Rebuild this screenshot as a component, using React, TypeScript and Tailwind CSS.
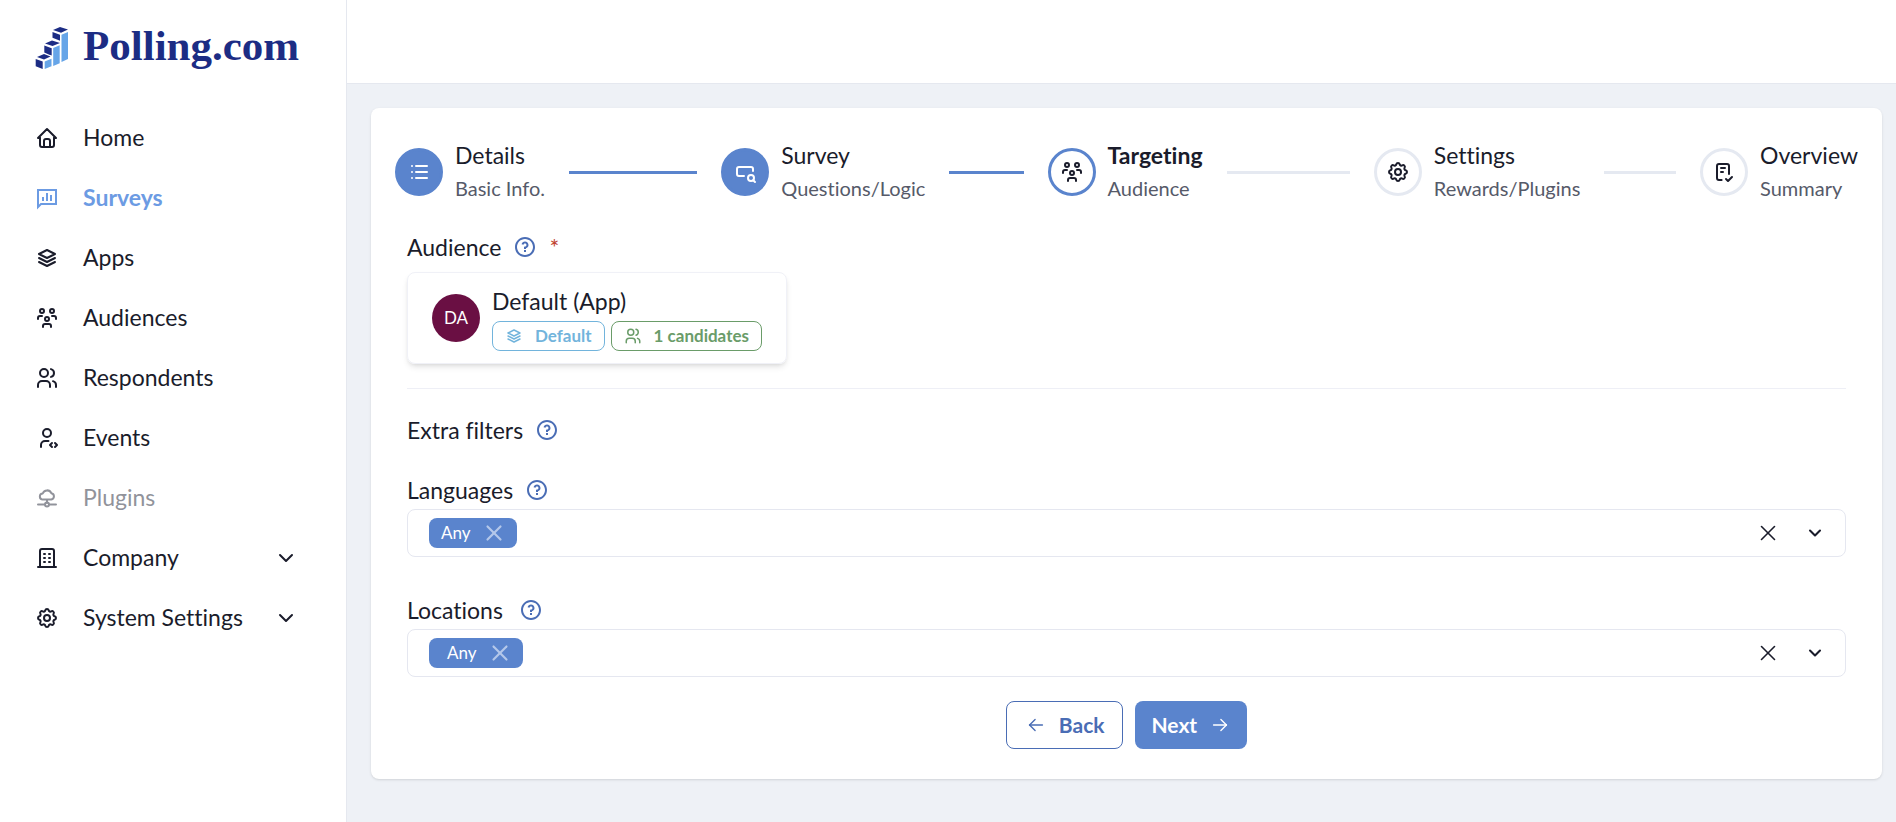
import React, { useState } from "react";
import {
  TbArrowLeft,
  TbArrowRight,
  TbBuilding,
  TbChecklist,
  TbChevronDown,
  TbHome,
  TbInputSearch,
  TbList,
  TbSettings,
  TbStack2,
  TbUserCode,
  TbUsers,
  TbUsersGroup,
  TbX,
} from "react-icons/tb";
import { RiQuestionLine } from "react-icons/ri";

type IconType = React.ComponentType<{ className?: string }>;

const SurveyIcon: IconType = ({ className }) => (
  <svg viewBox="0 0 24 24" fill="none" stroke="currentColor" strokeWidth="2" className={className}>
    <path d="M3 4h18v14H6l-3 3z" />
    <path d="M8 11v4M12 7v8M16 9v6" />
  </svg>
);

const CloudIcon: IconType = ({ className }) => (
  <svg
    viewBox="0 0 24 24"
    fill="none"
    stroke="currentColor"
    strokeWidth="2"
    strokeLinecap="round"
    strokeLinejoin="round"
    className={className}
  >
    <path d="M8 13.500a3 3 0 0 1-.3-6A4.600 4.600 0 0 1 16.300 7.200a3.200 3.200 0 0 1 0 6.300z" />
    <path d="M12 14v3M3 18.500h7M14 18.500h7" />
    <circle cx="12" cy="18.500" r="2" />
  </svg>
);

const LogoMark = () => (
  <svg viewBox="0 0 34 42" className="w-[34px] h-[42px]" aria-hidden="true">
    <g fill="#1c2c84">
      <path d="M18 3l7-3 8 2.500-7 3.200z" />
      <path d="M17.500 5l7.500 2.800v6l-3-1.400-4.500-1.600z" />
      <path d="M10 16.500l7-3 8 2.500-7.500 3z" />
      <path d="M9.300 18.500l7.400 2.700v7.300l-3.500-1.300-3.900-1.700z" />
      <path d="M2 30l7-3 6.500 2.600-6.500 3z" />
      <path d="M.7 32l7 2.600V42l-7-2.700z" />
    </g>
    <g fill="#66a5e8">
      <path d="M26.500 7.800L33 5v27l-6.500 3z" />
      <path d="M18.200 21l6.500-2.800v18l-6.500 2.700z" />
      <path d="M9.700 34.600l6.800-2.800v7.400L9.700 42z" />
    </g>
  </svg>
);

const navItems: { label: string; icon: IconType; active?: boolean; muted?: boolean; expandable?: boolean }[] = [
  { label: "Home", icon: TbHome },
  { label: "Surveys", icon: SurveyIcon, active: true },
  { label: "Apps", icon: TbStack2 },
  { label: "Audiences", icon: TbUsersGroup },
  { label: "Respondents", icon: TbUsers },
  { label: "Events", icon: TbUserCode },
  { label: "Plugins", icon: CloudIcon, muted: true },
  { label: "Company", icon: TbBuilding, expandable: true },
  { label: "System Settings", icon: TbSettings, expandable: true },
];

const steps: { title: string; subtitle: string; icon: IconType }[] = [
  { title: "Details", subtitle: "Basic Info.", icon: TbList },
  { title: "Survey", subtitle: "Questions/Logic", icon: TbInputSearch },
  { title: "Targeting", subtitle: "Audience", icon: TbUsersGroup },
  { title: "Settings", subtitle: "Rewards/Plugins", icon: TbSettings },
  { title: "Overview", subtitle: "Summary", icon: TbChecklist },
];

const currentStep = 2;

const circleStyle = (index: number) => {
  if (index < currentStep) return "border-[#5a84cd] bg-[#5a84cd] text-white";
  if (index === currentStep) return "border-[#5a84cd]";
  return "border-[#e5e9f1]";
};

const navStyle = (active?: boolean, muted?: boolean) => {
  if (active) return "font-bold text-[#6c9be3]";
  if (muted) return "text-[#91939b]";
  return "";
};

const HelpButton = ({ topic }: { topic: string }) => (
  <button type="button" aria-label={`Help: ${topic}`} className="text-[#4a6db5]">
    <RiQuestionLine className="size-6" />
  </button>
);

const FilterSelect = ({ id, label, wide }: { id: string; label: string; wide?: boolean }) => {
  const [values, setValues] = useState(["Any"]);

  return (
    <div>
      <div className={`flex items-center h-[34px] mb-[2px] ${wide ? "gap-4" : "gap-3"}`}>
        <label htmlFor={id}>{label}</label>
        <HelpButton topic={label} />
      </div>
      <div className="flex items-center h-12 rounded-lg border border-[#e5e7f0] pl-[21px] pr-5">
        {values.map((value) => (
          <span
            key={value}
            className={`flex items-center h-[30px] gap-[10px] rounded-lg bg-[#5a84cd] text-white text-[17px] pr-[10px] ${wide ? "pl-[18px]" : "pl-3"}`}
          >
            {value}
            <button
              type="button"
              aria-label={`Remove ${value}`}
              className="text-[#b4c8ea]"
              onClick={() => setValues(values.filter((v) => v !== value))}
            >
              <TbX className="size-[26px]" />
            </button>
          </span>
        ))}
        <input id={id} type="text" className="flex-1 min-w-0 px-2 outline-none" />
        <button type="button" aria-label={`Clear ${label}`} onClick={() => setValues([])}>
          <TbX className="size-[26px] stroke-[1.5]" />
        </button>
        <button type="button" aria-label={`Open ${label}`} className="ml-6">
          <TbChevronDown className="size-5 stroke-[2.5]" />
        </button>
      </div>
    </div>
  );
};

const App: React.FC = () => {
  return (
    <div className="flex min-h-screen bg-[#eef1f6] font-['Lato',sans-serif] [font-variant-ligatures:none] text-[23px] leading-8 text-[#1a1c2b]">
      <aside className="w-[347px] shrink-0 bg-white border-r border-[#e5e8ef]">
        <a href="#" className="flex items-center gap-[14px] h-24 pl-[35px] text-[#1c2c84]">
          <LogoMark />
          <span className="font-['Liberation_Serif',serif] text-[43px] font-bold pb-1">Polling.com</span>
        </a>
        <nav className="pt-3 pl-[35px] pr-12">
          {navItems.map(({ label, icon: Icon, active, muted, expandable }) => (
            <a key={label} href="#" className={`flex items-center h-[60px] ${navStyle(active, muted)}`}>
              <Icon className="size-6 mr-6" />
              <span className="flex-1 pb-[2px]">{label}</span>
              {expandable && <TbChevronDown className="size-6" />}
            </a>
          ))}
        </nav>
      </aside>

      <div className="flex-1 min-w-0">
        <header className="h-[84px] bg-white border-b border-[#e5e8ef]" />

        <main className="pt-6 pl-6 pr-[14px] pb-10">
          <section className="rounded-lg bg-white shadow-sm pt-[31px] px-6 pb-[30px]">
            <ol className="flex gap-6">
              {steps.map(({ title, subtitle, icon: Icon }, index) => (
                <li key={title} className={`flex items-center ${index < steps.length - 1 ? "flex-1" : ""}`}>
                  <span
                    className={`flex items-center justify-center size-12 shrink-0 rounded-full border-3 ${circleStyle(index)}`}
                  >
                    <Icon className="size-6" />
                  </span>
                  <div className="ml-3">
                    <p className={index === currentStep ? "font-bold" : ""}>{title}</p>
                    <p className="text-xl leading-[34px] text-[#565a69]">{subtitle}</p>
                  </div>
                  {index < steps.length - 1 && (
                    <div
                      className={`flex-1 h-[3px] ml-6 ${index < currentStep ? "bg-[#5a84cd]" : "bg-[#e5e9f1]"}`}
                    />
                  )}
                </li>
              ))}
            </ol>

            <div className="px-3">
              <div className="flex items-center gap-3 mt-[26px]">
                <h2>Audience</h2>
                <HelpButton topic="Audience" />
                <span className="text-[#c0432f]">*</span>
              </div>

              <div className="flex items-center w-fit gap-3 mt-[9px] py-3 px-6 rounded-lg border border-[#f0f1f7] shadow-md">
                <span className="flex items-center justify-center size-12 rounded-full bg-[#6a0f43] text-white text-[17px]">
                  DA
                </span>
                <div>
                  <p className="mb-1">Default (App)</p>
                  <div className="flex gap-[6px] text-[17px] font-bold">
                    <span className="flex items-center h-[30px] gap-3 px-3 rounded-lg border border-[#72b4dc] text-[#72b4dc]">
                      <TbStack2 className="size-[18px]" />
                      Default
                    </span>
                    <span className="flex items-center h-[30px] gap-3 px-3 rounded-lg border border-[#6a9c69] text-[#6a9c69]">
                      <TbUsers className="size-[18px]" />1 candidates
                    </span>
                  </div>
                </div>
              </div>

              <hr className="mt-6 border-[#eeeff6]" />

              <div className="flex items-center gap-3 mt-6 mb-[26px] h-[34px]">
                <h2>Extra filters</h2>
                <HelpButton topic="Extra filters" />
              </div>

              <FilterSelect id="languages" label="Languages" />
              <div className="mt-9">
                <FilterSelect id="locations" label="Locations" wide />
              </div>

              <div className="flex justify-center gap-3 mt-6 font-bold text-[21px]">
                <button
                  type="button"
                  className="flex items-center h-12 gap-3 px-[18px] rounded-lg border border-[#4a6db5] text-[#4a6db5]"
                >
                  <TbArrowLeft className="size-[22px] stroke-[1.5]" />
                  Back
                </button>
                <button type="button" className="flex items-center h-12 gap-3 px-4 rounded-lg bg-[#5a84cd] text-white">
                  Next
                  <TbArrowRight className="size-[22px] stroke-[1.5]" />
                </button>
              </div>
            </div>
          </section>
        </main>
      </div>
    </div>
  );
};

export default App;
